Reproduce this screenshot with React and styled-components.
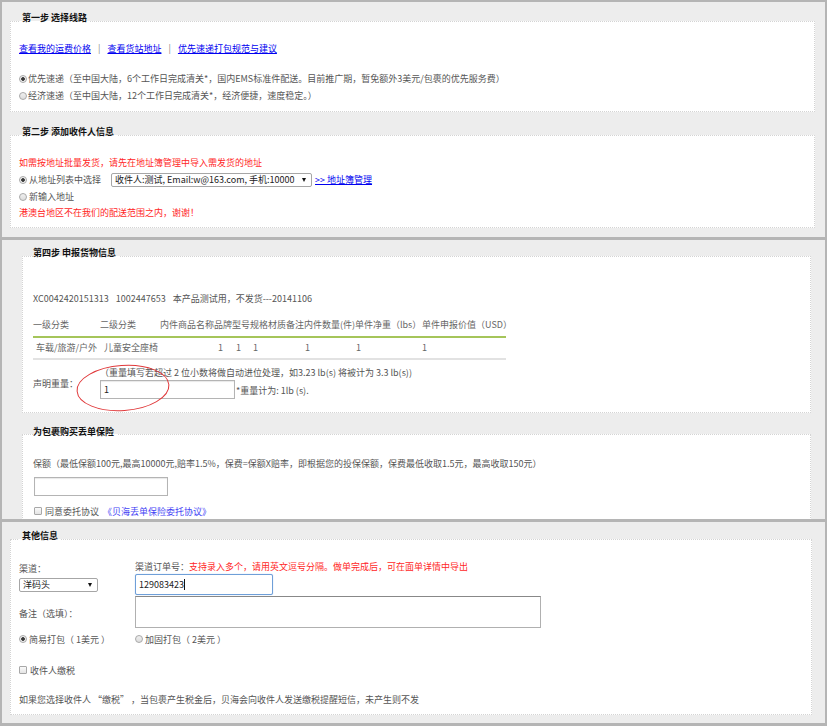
import React from 'react';
import styled, { createGlobalStyle } from 'styled-components';

const GlobalStyle = createGlobalStyle`
  html, body {
    margin: 0;
    padding: 0;
    background: #fff;
  }
  body {
    font-family: "Noto Sans CJK SC", "Noto Sans", sans-serif;
    font-size: 9px;
    color: #555;
  }
`;

const Page = styled.div`
  width: 827px;
`;

const Panel = styled.div`
  position: relative;
  box-sizing: border-box;
  width: 827px;
  height: ${p => p.$height}px;
  overflow: hidden;
  background: #ededed;
  border: 0 solid #b5b5b5;
  border-width: ${p => p.$borders};
  padding: ${p => p.$pad};
`;

const Fieldset = styled.fieldset`
  margin: ${p => p.$mt || 0}px 0 0;
  padding: ${p => p.$pad};
  border: 1px dotted #d4d4d4;
  background: #fff;
  min-width: 0;
`;

const Legend = styled.legend`
  padding: 0 3px 6px ${p => p.$indent}px;
  font-size: 9px;
  line-height: 12px;
  font-weight: bold;
  color: #111;
`;

const Line = styled.div`
  display: flex;
  align-items: center;
  line-height: ${p => p.$lh || 17}px;
  margin-top: ${p => p.$mt || 0}px;
  color: ${p => (p.$red ? '#ff1f1f' : '#555')};
  white-space: nowrap;
`;

const LinkA = styled.a`
  color: #0000f0;
  text-decoration: underline;
  cursor: pointer;
  margin-left: ${p => p.$ml || 0}px;
`;

const Sep = styled.span`
  color: #888;
  margin: 0 7px;
`;

const Radio = styled.span`
  display: inline-block;
  flex-shrink: 0;
  box-sizing: border-box;
  width: 8px;
  height: 8px;
  margin-right: ${p => p.$gap || 1}px;
  border: 1px solid #a8a8a8;
  border-radius: 50%;
  background: ${p =>
    p.$checked
      ? 'radial-gradient(circle, #3a3a3a 0 1.5px, #f2f2f2 2.2px)'
      : 'linear-gradient(#f0f0f0, #dcdcdc)'};
`;

const Check = styled.span`
  display: inline-block;
  flex-shrink: 0;
  box-sizing: border-box;
  width: 8px;
  height: 8px;
  margin-left: ${p => p.$ml || 0}px;
  margin-right: 3px;
  border: 1px solid #a8a8a8;
  border-radius: 1px;
  background: linear-gradient(#fafafa, #e4e4e4);
`;

const SelectBox = styled.div`
  display: flex;
  align-items: center;
  box-sizing: border-box;
  width: ${p => p.$w}px;
  height: 14px;
  margin-left: ${p => p.$ml || 0}px;
  padding: 0 3px;
  border: 1px solid #a6a6a6;
  border-radius: 2px;
  background: #fff;
  color: #222;
  overflow: hidden;
`;

const SelectText = styled.span`
  flex: 1;
  min-width: 0;
  overflow: hidden;
  white-space: nowrap;
  line-height: 12px;
`;

const Arrow = styled.span`
  flex-shrink: 0;
  width: 0;
  height: 0;
  margin: 0 2px 0 4px;
  border-left: 2.5px solid transparent;
  border-right: 2.5px solid transparent;
  border-top: 4px solid #111;
`;

const IdLine = styled.div`
  line-height: 17px;
  color: #555;
  white-space: nowrap;
  span + span {
    margin-left: 7px;
  }
`;

const Table = styled.div`
  display: grid;
  grid-template-columns: 67px 60px 54px 18px 18px 18px 18px 18px 51px 67px 84px;
  width: 473px;
  margin-top: 9px;
  color: #666;
  white-space: nowrap;
`;

const Th = styled.div`
  line-height: 17px;
  padding-bottom: 3px;
  border-bottom: 2px solid #a5c55a;
`;

const Td = styled.div`
  line-height: 19.5px;
  padding-left: ${p => p.$pad || 0}px;
  border-bottom: 2px solid #e2e2e2;
`;

const WeightRow = styled.div`
  display: flex;
  align-items: center;
  margin-top: 6px;
  white-space: nowrap;
`;

const WeightLabel = styled.div`
  width: 67px;
  padding-top: 3px;
`;

const Hint = styled.div`
  line-height: 14px;
`;

const InputRow = styled.div`
  display: flex;
  align-items: center;
`;

const TextInput = styled.div`
  box-sizing: border-box;
  display: flex;
  align-items: center;
  width: ${p => p.$w}px;
  height: ${p => p.$h}px;
  margin-top: ${p => p.$mt || 0}px;
  margin-left: ${p => p.$ml || 0}px;
  padding-left: 3px;
  border: 1px solid ${p => (p.$focus ? '#6f9fd8' : '#b4b4b4')};
  border-radius: ${p => (p.$focus ? 2 : 0)}px;
  box-shadow: ${p => (p.$focus ? '0 0 1px #8fb8e8' : 'inset 0 1px 1px #e8e8e8')};
  background: #fff;
  color: #222;
`;

const Caret = styled.span`
  display: inline-block;
  width: 1px;
  height: 11px;
  background: #111;
`;

const Note = styled.span`
  margin-left: 1px;
  padding-top: 3px;
`;

const Agreement = styled.a`
  margin-left: 4px;
  color: #4343f5;
  text-decoration: none;
`;

const OtherGrid = styled.div`
  display: grid;
  grid-template-columns: 116px 1fr;
  align-items: start;
  white-space: nowrap;
`;

const Col = styled.div`
  padding-top: ${p => p.$pt || 0}px;
`;

const SmallLabel = styled.div`
  line-height: 14px;
  margin-bottom: ${p => p.$mb || 0}px;
  color: #555;
`;

const Red = styled.span`
  color: #ff1f1f;
`;

const Textarea = styled.div`
  box-sizing: border-box;
  width: 406px;
  height: 32px;
  border: 1px solid #b0b0b0;
  border-top-color: #888;
  background: #fff;
`;

const RemarkLabel = styled.div`
  align-self: center;
  padding-top: 3px;
`;

const Ellipse = styled.svg`
  position: absolute;
  left: 73px;
  top: 123px;
  pointer-events: none;
`;

const Item = styled.span`
  display: flex;
  align-items: center;
`;

export default function App() {
  return (
    <Page>
      <GlobalStyle />

      <Panel $height={237} $borders="2px 2px 0 2px" $pad="10px 10px 0 8px">
        <Fieldset $pad="10px 8px 7px">
          <Legend $indent={3}>第一步 选择线路</Legend>
          <Line>
            <LinkA>查看我的运费价格</LinkA>
            <Sep>|</Sep>
            <LinkA>查看货站地址</LinkA>
            <Sep>|</Sep>
            <LinkA>优先速递打包规范与建议</LinkA>
          </Line>
          <Line $mt={13}>
            <Radio $checked />
            优先速递（至中国大陆，6个工作日完成清关*，国内EMS标准件配送。目前推广期，暂免额外3美元/包裹的优先服务费）
          </Line>
          <Line>
            <Radio />
            经济速递（至中国大陆，12个工作日完成清关*，经济便捷，速度稳定。）
          </Line>
        </Fieldset>

        <Fieldset $mt={14} $pad="10px 8px 7px">
          <Legend $indent={3}>第二步 添加收件人信息</Legend>
          <Line $red>如需按地址批量发货，请先在地址簿管理中导入需发货的地址</Line>
          <Line>
            <Radio $checked $gap={2} />
            从地址列表中选择
            <SelectBox $w={201} $ml={10}>
              <SelectText>收件人:测试, Email:w@163.com, 手机:10000</SelectText>
              <Arrow />
            </SelectBox>
            <LinkA $ml={3}>&gt;&gt; 地址簿管理</LinkA>
          </Line>
          <Line>
            <Radio $gap={2} />
            新输入地址
          </Line>
          <Line $red $lh={15}>港澳台地区不在我们的配送范围之内，谢谢！</Line>
        </Fieldset>
      </Panel>

      <Panel $height={282} $borders="3px 2px 0 2px" $pad="7px 14px 0 20px">
        <Fieldset $pad="25px 10px 13px">
          <Legend $indent={0}>第四步 申报货物信息</Legend>
          <IdLine>
            <span>XC0042420151313</span>
            <span>1002447653</span>
            <span>本产品测试用，不发货---20141106</span>
          </IdLine>
          <Table>
            <Th>一级分类</Th>
            <Th>二级分类</Th>
            <Th>内件商品名称</Th>
            <Th>品牌</Th>
            <Th>型号</Th>
            <Th>规格</Th>
            <Th>材质</Th>
            <Th>备注</Th>
            <Th>内件数量(件)</Th>
            <Th>单件净重（lbs）</Th>
            <Th>单件申报价值（USD）</Th>
            <Td $pad={3}>车载/旅游/户外</Td>
            <Td $pad={4}>儿童安全座椅</Td>
            <Td />
            <Td $pad={4}>1</Td>
            <Td $pad={4}>1</Td>
            <Td $pad={3}>1</Td>
            <Td />
            <Td />
            <Td $pad={1}>1</Td>
            <Td $pad={1}>1</Td>
            <Td $pad={0}>1</Td>
          </Table>
          <WeightRow>
            <WeightLabel>声明重量：</WeightLabel>
            <div>
              <Hint>（重量填写若超过 2 位小数将做自动进位处理，如3.23 lb(s) 将被计为 3.3 lb(s))</Hint>
              <InputRow>
                <TextInput $w={135} $h={19}>1</TextInput>
                <Note>*重量计为: 1lb (s).</Note>
              </InputRow>
            </div>
          </WeightRow>
        </Fieldset>

        <Fieldset $mt={13} $pad="11px 10px 13px">
          <Legend $indent={0}>为包裹购买丢单保险</Legend>
          <Line>保额（最低保额100元,最高10000元,赔率1.5%，保费=保额X赔率，即根据您的投保保额，保费最低收取1.5元，最高收取150元）</Line>
          <TextInput $w={134} $h={19} $mt={5.5} $ml={1} />
          <Line $mt={6.5}>
            <Check $ml={1} />
            同意委托协议
            <Agreement>《贝海丢单保险委托协议》</Agreement>
          </Line>
        </Fieldset>

        <Ellipse width="96" height="50" viewBox="0 0 96 50">
          <ellipse cx="48" cy="25" rx="46" ry="22.5" fill="none" stroke="#e0383a" strokeWidth="1" transform="rotate(-4 48 25)" />
        </Ellipse>
      </Panel>

      <Panel $height={207} $borders="3px 2px 3px 2px" $pad="8px 13px 0 8px">
        <Fieldset $pad="12px 8px 6.5px">
          <Legend $indent={3}>其他信息</Legend>
          <OtherGrid>
            <Col $pt={2}>
              <SmallLabel $mb={2}>渠道：</SmallLabel>
              <SelectBox $w={79}>
                <SelectText>洋码头</SelectText>
                <Arrow />
              </SelectBox>
            </Col>
            <Col>
              <SmallLabel>
                渠道订单号：<Red>支持录入多个，请用英文逗号分隔。做单完成后，可在面单详情中导出</Red>
              </SmallLabel>
              <TextInput $w={138} $h={21} $focus>
                129083423
                <Caret />
              </TextInput>
            </Col>
            <RemarkLabel>备注（选填）：</RemarkLabel>
            <Col $pt={1}>
              <Textarea />
            </Col>
          </OtherGrid>
          <OtherGrid>
            <Line $mt={2.5}>
              <Item>
                <Radio $checked $gap={2} />
                简易打包（ 1美元 ）
              </Item>
            </Line>
            <Line $mt={2.5}>
              <Item>
                <Radio $gap={2} />
                加固打包（ 2美元 ）
              </Item>
            </Line>
          </OtherGrid>
          <Line $mt={14}>
            <Check />
            收件人缴税
          </Line>
          <Line $mt={12}>如果您选择收件人 “缴税” ，当包裹产生税金后，贝海会向收件人发送缴税提醒短信，未产生则不发</Line>
        </Fieldset>
      </Panel>
    </Page>
  );
}
